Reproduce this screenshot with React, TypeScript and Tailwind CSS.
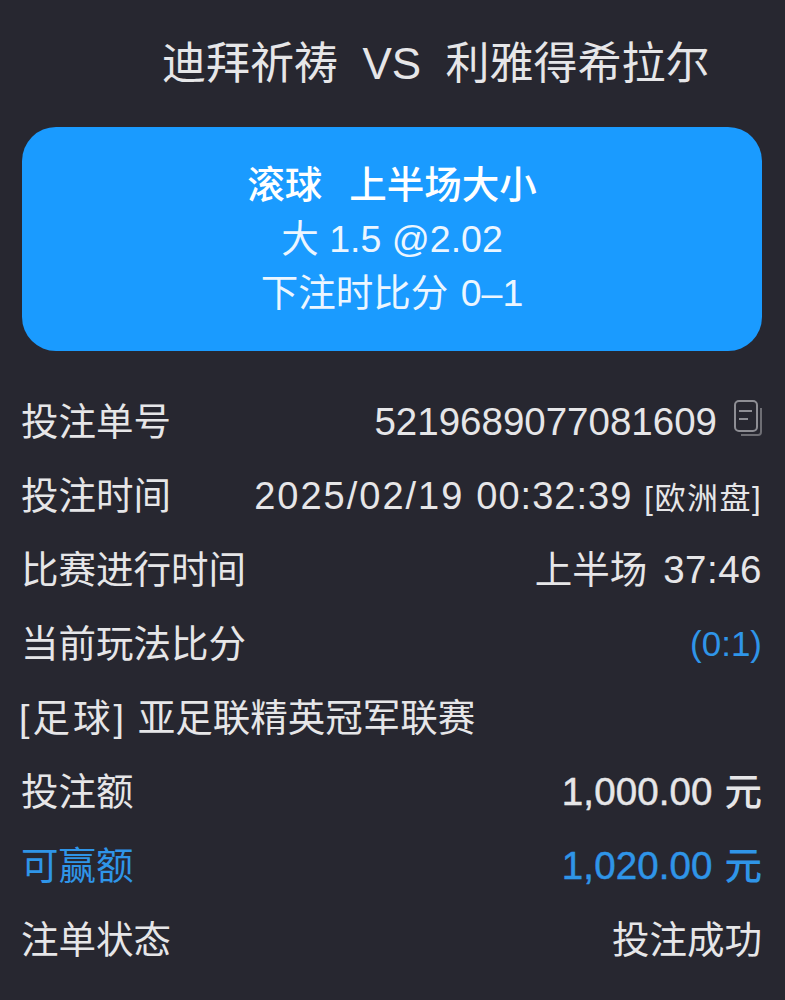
const FONT = "font-['Liberation_Sans','Noto_Sans_CJK_SC',sans-serif]";

function CopyIcon() {
  return (
    <svg width="28" height="36" viewBox="0 0 28 36" fill="none" className="ml-[17px] mb-[8px] shrink-0">
      <rect x="1" y="1" width="22" height="30" rx="4" stroke="#8e8e94" strokeWidth="2" />
      <path d="M5 11h13M5 19h9" stroke="#8e8e94" strokeWidth="2" />
      <path d="M27 8v24a3 3 0 0 1-3 3H7" stroke="#6e6e74" strokeWidth="2" />
    </svg>
  );
}

function Row({ children }: { children: React.ReactNode }) {
  return <div className="h-[74px] flex items-center justify-between whitespace-nowrap">{children}</div>;
}

export default function App() {
  return (
    <div className={`${FONT} w-[785px] h-[1000px] overflow-hidden bg-[#272730] text-[#e6e6e8]`}>
      <h1 className="h-[127px] pl-[162px] pt-[37px] text-[44px] leading-[54px] font-normal whitespace-pre">
        迪拜祈祷  VS  利雅得希拉尔
      </h1>

      <section className="ml-[22px] mr-[23px] h-[224px] rounded-[34px] bg-[#1a9bff] text-white flex flex-col items-center pt-[31px] text-[37.5px] leading-[54px]">
        <div className="font-medium whitespace-pre [word-spacing:3px]">滚球  上半场大小</div>
        <div className="whitespace-pre text-[#ecf6ff]">大 1.5 @2.02</div>
        <div className="whitespace-pre text-[#ecf6ff] [word-spacing:2px]">下注时比分 0–1</div>
      </section>

      <div className="mt-[34px] pl-[21px] pr-[23px] text-[37.5px]">
        <Row>
          <span>投注单号</span>
          <span className="flex items-center text-[38.5px]">5219689077081609<CopyIcon /></span>
        </Row>
        <Row>
          <span>投注时间</span>
          <span className="flex items-baseline">
            <span className="text-[38px] tracking-[2px]">2025/02/19</span>
            <span className="ml-[12px] text-[38px] tracking-[1px]">00:32:39</span>
            <span className="ml-[12px] text-[31px] tracking-[1.5px]">[欧洲盘]</span>
          </span>
        </Row>
        <Row>
          <span>比赛进行时间</span>
          <span className="flex items-baseline">
            <span>上半场</span>
            <span className="ml-[16px] text-[38.5px] tracking-[0.5px]">37:46</span>
          </span>
        </Row>
        <Row>
          <span>当前玩法比分</span>
          <span className="text-[#2f95e8] text-[35px]">(0:1)</span>
        </Row>
        <Row>
          <span className="-ml-[2px] flex items-baseline">
            <span className="tracking-[3px]">[足球]</span>
            <span className="ml-[11px]">亚足联精英冠军联赛</span>
          </span>
        </Row>
        <Row>
          <span>投注额</span>
          <span className="flex items-baseline">
            <span className="text-[38.5px] tracking-[0.1px] [-webkit-text-stroke:0.5px_#e6e6e8]">1,000.00</span>
            <span className="ml-[12px] font-medium">元</span>
          </span>
        </Row>
        <Row>
          <span className="text-[#2f95e8]">可赢额</span>
          <span className="flex items-baseline text-[#2f95e8]">
            <span className="text-[38.5px] tracking-[0.1px] [-webkit-text-stroke:0.5px_#2f95e8]">1,020.00</span>
            <span className="ml-[12px] font-medium">元</span>
          </span>
        </Row>
        <Row>
          <span>注单状态</span>
          <span>投注成功</span>
        </Row>
      </div>
    </div>
  );
}
